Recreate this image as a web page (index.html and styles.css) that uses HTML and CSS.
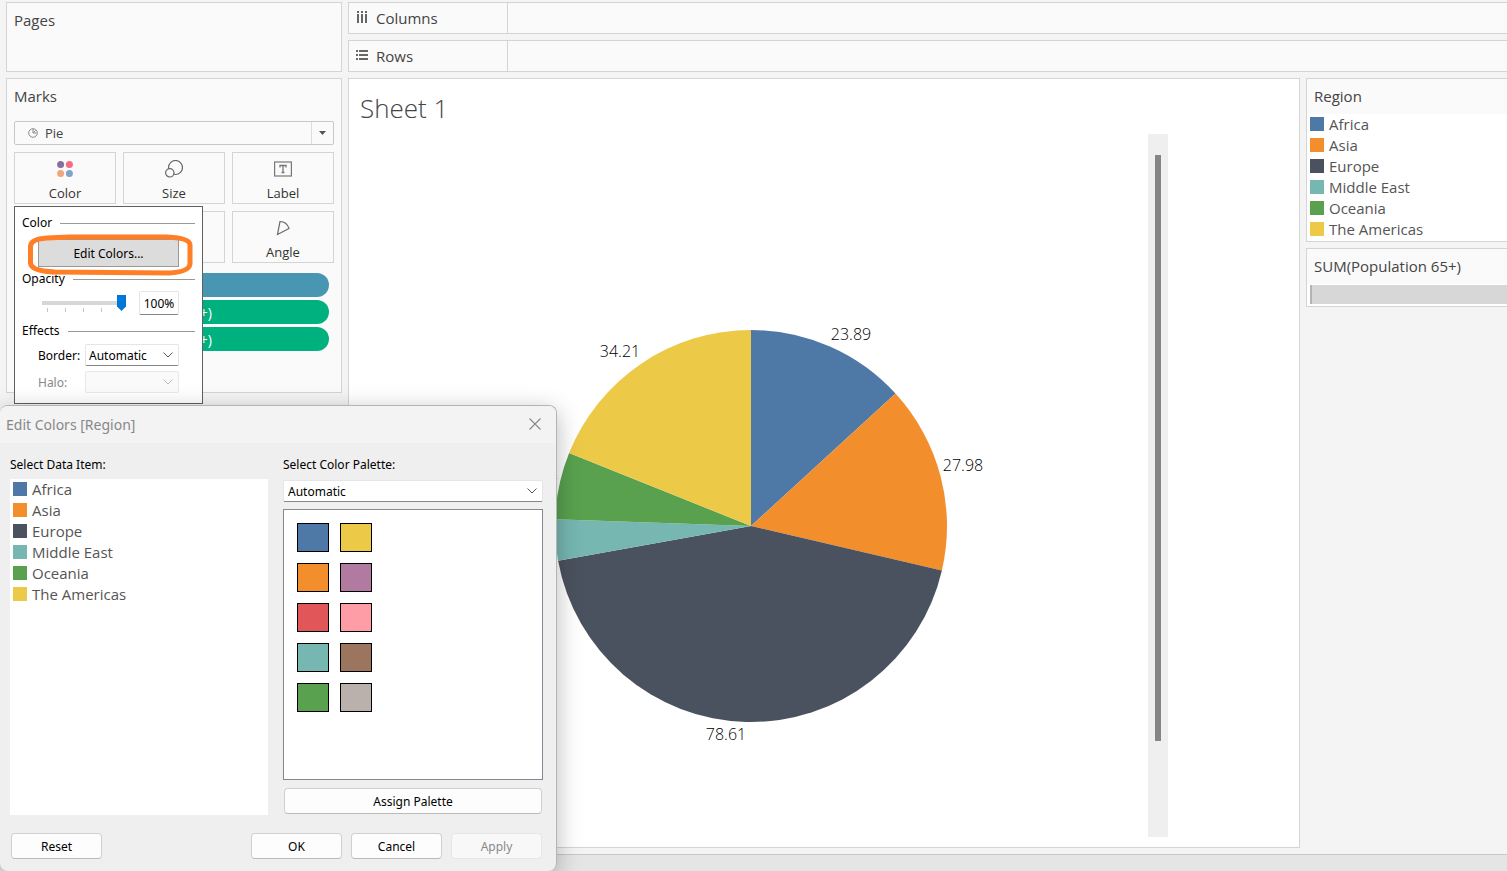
FILE: index.html
```html
<!DOCTYPE html>
<html lang="en">
<head>
<meta charset="utf-8">
<title>Sheet 1</title>
<link rel="stylesheet" href="styles.css">
</head>
<body>
<div class="workspace">
  <aside class="side">
    <section class="card pages"><h2 class="card-title">Pages</h2></section>
    <section class="card marks">
      <h2 class="card-title">Marks</h2>
      <button class="mark-type" type="button">
        <svg class="pie-icon" width="10" height="10" viewBox="0 0 10 10" fill="none" stroke="#8a8a8a"><circle cx="5" cy="5" r="4.3"/><path d="M5 1v4h3.5M5 5l2.5-2.5"/></svg>
        <span class="mark-name">Pie</span>
        <span class="mark-arrow"><svg width="7" height="4" viewBox="0 0 7 4"><path d="M0 0h7L3.500 4z" fill="#555"/></svg></span>
      </button>
      <div class="mark-grid">
        <button class="mark" type="button">
          <svg width="18" height="18" viewBox="0 0 18 18"><circle cx="4.600" cy="4.600" r="3.500" fill="#86709b"/><circle cx="13.400" cy="4.600" r="3.500" fill="#f96b80"/><circle cx="4.600" cy="13.400" r="3.500" fill="#f2a57a"/><circle cx="13.400" cy="13.400" r="3.500" fill="#7fa3cb"/></svg>
          Color</button>
        <button class="mark" type="button">
          <svg width="18" height="18" viewBox="0 0 18 18" fill="none" stroke="#666" stroke-width="1.200"><circle cx="10.500" cy="7.500" r="7"/><circle cx="4.800" cy="12.800" r="4.200" fill="#fafafa"/></svg>
          Size</button>
        <button class="mark" type="button">
          <svg width="18" height="18" viewBox="0 0 18 18" fill="none" stroke="#777"><rect x=".6" y="2" width="16.800" height="14" stroke-width="1.200"/><path d="M6 7.500V5.500h6v2M9 5.500v7M7.500 12.500h3" stroke-width="1.300"/></svg>
          Label</button>
        <button class="mark" type="button" aria-label="Detail"></button>
        <button class="mark" type="button" aria-label="Tooltip"></button>
        <button class="mark" type="button">
          <svg width="18" height="18" viewBox="0 0 18 18" fill="none" stroke="#666" stroke-width="1.200"><path d="M6 2.500L3.500 15.500 15 9.500C13.500 5 10 2.500 6 2.500z"/></svg>
          Angle</button>
      </div>
      <ul class="pills">
        <li class="pill pill-dim" aria-label="Region"></li>
        <li class="pill"><span>SUM(Population 65+)</span></li>
        <li class="pill"><span>SUM(Population 65+)</span></li>
      </ul>
      <div class="popup">
        <h3 class="group">Color</h3>
        <div class="edit-wrap">
          <button class="edit" type="button">Edit Colors...</button>
          <svg class="ring" width="168" height="44" viewBox="0 0 168 44" fill="none" stroke="#ff7f27" stroke-width="5"><path d="M20 5L42 4 140 4Q163 5 163 12L163 31Q162 39 142 40L28 39Q4 38 3.500 30L3.500 13Q4 6 20 5z"/></svg>
        </div>
        <h3 class="group">Opacity</h3>
        <div class="opacity">
          <div class="slider">
            <input type="range" min="0" max="100" value="100" aria-label="Opacity">
            <div class="ticks"><i></i><i></i><i></i><i></i></div>
          </div>
          <input class="percent" type="text" value="100%" aria-label="Opacity percent">
        </div>
        <h3 class="group effects">Effects</h3>
        <div class="field">
          <label for="border">Border:</label>
          <div class="combo"><select id="border"><option>Automatic</option></select><svg class="chev" width="10" height="6" viewBox="0 0 10 6"><path d="M.5.5L5 5 9.500.5"/></svg></div>
        </div>
        <div class="field off">
          <label for="halo">Halo:</label>
          <div class="combo"><select id="halo" disabled></select><svg class="chev" width="10" height="6" viewBox="0 0 10 6"><path d="M.5.5L5 5 9.500.5"/></svg></div>
        </div>
      </div>
    </section>
  </aside>
  <main class="main">
    <div class="shelf"><div class="shelf-name">
      <svg width="12" height="12" viewBox="0 0 12 12" fill="#666"><path d="M1 0h2v2H1zM5 0h2v2H5zM9 0h2v2H9zM1 3h2v9H1zM5 3h2v9H5zM9 3h2v9H9z"/></svg>Columns</div></div>
    <div class="shelf"><div class="shelf-name">
      <svg width="12" height="12" viewBox="0 0 12 12" fill="#666"><path d="M0 1h2v2H0zM0 5h2v2H0zM0 9h2v2H0zM3 1h9v2H3zM3 5h9v2H3zM3 9h9v2H3z"/></svg>Rows</div></div>
    <div class="view">
      <section class="sheet">
        <h1 class="sheet-title">Sheet 1</h1>
        <div class="viz">
          <svg class="chart" viewBox="0 0 794 703" preserveAspectRatio="xMidYMin meet" role="img" aria-label="Population 65+ by region">
            <path fill="#4e79a7" d="M397 392V196A196 196 0 0 1 541.500 259.600z"/>
            <path fill="#f28e2b" d="M397 392L541.500 259.600A196 196 0 0 1 587.900 436.400z"/>
            <path fill="#4b525f" d="M397 392L587.900 436.400A196 196 0 0 1 204.100 426.700z"/>
            <path fill="#76b7b2" d="M397 392L204.100 426.700A196 196 0 0 1 201.100 385.200z"/>
            <path fill="#59a14f" d="M397 392L201.100 385.200A196 196 0 0 1 215.100 319z"/>
            <path fill="#edc948" d="M397 392L215.100 319A196 196 0 0 1 397 196z"/>
            <g class="value"><text x="497" y="206">23.89</text><text x="609" y="337">27.98</text><text x="372" y="606">78.61</text><text x="184" y="345">10.12</text><text x="266" y="223">34.21</text></g>
          </svg>
          <div class="scroll"><div class="thumb"></div></div>
        </div>
      </section>
      <aside class="legends">
        <section class="card">
          <h2 class="card-title legend-title">Region</h2>
          <ul class="items">
            <li><i class="sw blue"></i>Africa</li><li><i class="sw orange"></i>Asia</li><li><i class="sw slate"></i>Europe</li><li><i class="sw teal"></i>Middle East</li><li><i class="sw green"></i>Oceania</li><li><i class="sw yellow"></i>The Americas</li>
          </ul>
        </section>
        <section class="card">
          <h2 class="card-title legend-title">SUM(Population 65+)</h2>
          <div class="size-range"><div></div></div>
        </section>
      </aside>
    </div>
  </main>
</div>
<footer class="status"></footer>

<div class="dialog" role="dialog" aria-labelledby="dlg-title">
  <header class="dlg-head"><h2 id="dlg-title">Edit Colors [Region]</h2>
    <button class="close" type="button" aria-label="Close"><svg width="12" height="12" viewBox="0 0 12 12" stroke="#888" stroke-width="1.100"><path d="M.5.5l11 11M11.500.5l-11 11"/></svg></button></header>
  <div class="dlg-body">
    <div class="dlg-left">
      <h3 class="dlg-label">Select Data Item:</h3>
      <ul class="items data-list">
        <li><i class="sw blue"></i>Africa</li><li><i class="sw orange"></i>Asia</li><li><i class="sw slate"></i>Europe</li><li><i class="sw teal"></i>Middle East</li><li><i class="sw green"></i>Oceania</li><li><i class="sw yellow"></i>The Americas</li>
      </ul>
    </div>
    <div class="dlg-right">
      <label class="dlg-label" for="palette">Select Color Palette:</label>
      <div class="combo"><select id="palette"><option>Automatic</option></select><svg class="chev" width="10" height="6" viewBox="0 0 10 6"><path d="M.5.5L5 5 9.500.5"/></svg></div>
      <div class="palette">
        <button class="chip blue" type="button" aria-label="Blue"></button><button class="chip yellow" type="button" aria-label="Yellow"></button>
        <button class="chip orange" type="button" aria-label="Orange"></button><button class="chip purple" type="button" aria-label="Purple"></button>
        <button class="chip red" type="button" aria-label="Red"></button><button class="chip pink" type="button" aria-label="Pink"></button>
        <button class="chip teal" type="button" aria-label="Teal"></button><button class="chip brown" type="button" aria-label="Brown"></button>
        <button class="chip green" type="button" aria-label="Green"></button><button class="chip gray" type="button" aria-label="Gray"></button>
      </div>
      <button class="btn assign" type="button">Assign Palette</button>
    </div>
  </div>
  <footer class="dlg-foot">
    <button class="btn reset" type="button">Reset</button>
    <button class="btn" type="button">OK</button>
    <button class="btn" type="button">Cancel</button>
    <button class="btn" type="button" disabled>Apply</button>
  </footer>
</div>
</body>
</html>
```
FILE: styles.css
```css
* { box-sizing: border-box; }
body {
  margin: 0;
  height: 100vh;
  display: flex;
  flex-direction: column;
  overflow: hidden;
  background: #f4f4f4;
  color: #444;
  font: 15px/20px "Open Sans", sans-serif;
}
h1, h2, h3, ul { margin: 0; padding: 0; font-weight: 400; list-style: none; }
button, input, select { font: inherit; color: inherit; margin: 0; }
svg { flex: none; }

.blue { background: #4e79a7; }
.orange { background: #f28e2b; }
.slate { background: #4b525f; }
.teal { background: #76b7b2; }
.green { background: #59a14f; }
.yellow { background: #edc948; }
.purple { background: #b07aa1; }
.red { background: #e15759; }
.pink { background: #ff9da7; }
.brown { background: #9c755f; }
.gray { background: #bab0ac; }

.workspace {
  flex: 1;
  min-height: 0;
  display: grid;
  grid-template-columns: 336px 1fr;
  gap: 6px;
  padding: 2px 0 6px 6px;
}
.side, .main { display: flex; flex-direction: column; gap: 6px; min-width: 0; }
.card { background: #fafafa; border: 1px solid #d4d4d4; }
.card-title { font-size: 15px; line-height: 20px; }
.pages { height: 70px; padding: 7px; }
.marks { position: relative; height: 315px; padding: 7px; }

.mark-type {
  display: flex;
  align-items: center;
  width: 100%;
  height: 24px;
  margin-top: 15px;
  padding: 0 0 0 13px;
  border: 1px solid #c8c8c8;
  border-radius: 2px;
  background: #fafafa;
  font-size: 13px;
  text-align: left;
}
.mark-name { flex: 1; padding-left: 7px; }
.mark-arrow {
  display: flex;
  align-items: center;
  justify-content: center;
  width: 22px;
  height: 22px;
  border-left: 1px solid #ddd;
}
.mark-grid {
  display: grid;
  grid-template-columns: repeat(3, 1fr);
  gap: 7px;
  margin-top: 7px;
}
.mark {
  display: flex;
  flex-direction: column;
  align-items: center;
  gap: 6px;
  height: 52px;
  padding: 7px 0 0;
  border: 1px solid #d4d4d4;
  background: #fafafa;
  color: #333;
  font-size: 13px;
  line-height: 18px;
}
.pills { display: flex; flex-direction: column; gap: 3px; margin: 10px 5px 0 19px; }
.pill {
  height: 24px;
  border-radius: 12px;
  background: #00b180;
  color: #fff;
  font-size: 14px;
  line-height: 26px;
}
.pill span { display: block; width: 179px; text-align: right; }
.pill-dim { background: #4996b2; }

.popup {
  position: absolute;
  left: 7px;
  top: 127px;
  width: 189px;
  height: 198px;
  padding: 8px 7px 7px;
  border: 1px solid #606060;
  background: #fff;
  color: #000;
  font: 12px/16px "Noto Sans", sans-serif;
}
.group { display: flex; align-items: center; gap: 8px; font-size: 12px; line-height: 16px; }
.group::after { content: ""; flex: 1; border-top: 1px solid #999; }
.edit-wrap { position: relative; padding: 8px 16px 4px; }
.edit {
  display: block;
  width: 100%;
  height: 28px;
  padding: 2px 0 0;
  border: 1px solid #999;
  background: #dcdcdc;
}
.ring { position: absolute; left: 5px; top: 2px; }
.opacity { display: flex; align-items: center; justify-content: space-between; height: 32px; margin-bottom: 4px; padding: 0 16px 0 20px; }
.slider { width: 84px; height: 16px; }
.slider input {
  display: block;
  width: 84px;
  height: 16px;
  appearance: none;
  background: linear-gradient(#d5d8d7, #d5d8d7) 0 6px / 84px 4px no-repeat;
}
.slider input::-webkit-slider-thumb {
  appearance: none;
  width: 9px;
  height: 16px;
  background: #0078d7;
  clip-path: polygon(0 0, 100% 0, 100% 72%, 50% 100%, 0 72%);
}
.ticks { display: flex; gap: 17px; padding-left: 5px; margin-top: -3px; }
.ticks i { width: 1px; height: 4px; background: #c4c4c4; }
.percent {
  width: 40px;
  height: 24px;
  padding: 0 2px;
  border: 1px solid #e5e5e5;
  border-bottom-color: #868686;
  border-radius: 2px;
  text-align: center;
}
.field { display: grid; grid-template-columns: 47px 94px; align-items: center; margin: 5px 0 0 16px; }
.field label { padding-top: 2px; }
.combo { position: relative; height: 22px; }
.combo select {
  width: 100%;
  height: 100%;
  padding: 2px 3px 0;
  appearance: none;
  border: 1px solid #e5e5e5;
  border-bottom-color: #868686;
  border-radius: 2px;
  background: #fff;
}
.chev { position: absolute; right: 6px; top: 8px; fill: none; stroke: #555; }
.off { color: #888; }
.combo select:disabled { background: #fafafa; border-color: #e8e8e8; opacity: 1; }
.off .chev { stroke: #bbb; }

.shelf { height: 32px; border: 1px solid #d4d4d4; border-right: 0; background: #fafafa; }
.shelf-name {
  display: flex;
  align-items: center;
  gap: 8px;
  width: 159px;
  height: 30px;
  padding: 0 0 1px 7px;
  border-right: 1px solid #d4d4d4;
}
.shelf-name svg { margin-bottom: 1px; }
.view { flex: 1; min-height: 0; display: grid; grid-template-columns: 1fr 201px; gap: 6px; }
.sheet { display: flex; flex-direction: column; min-height: 0; padding: 14px 131px 10px 5px; border: 1px solid #d4d4d4; background: #fff; }
.sheet-title { padding-left: 6px; font-size: 26px; line-height: 30px; font-weight: 300; }
.viz { flex: 1; display: flex; min-height: 0; margin-top: 11px; }
.chart { flex: 1 1 0; min-width: 0; height: 703px; }
.value { fill: #000; font-size: 16px; font-weight: 300; text-anchor: middle; }
.scroll { width: 20px; padding: 21px 6px 0 7px; background: #efefef; }
.thumb { width: 6px; height: 586px; background: #858585; }

.legends { display: flex; flex-direction: column; gap: 6px; min-width: 0; }
.legends .card { border-right: 0; background: #fff; }
.legend-title { height: 35px; padding: 7px 7px 0; background: #fafafa; }
.items { padding: 0 3px 1px; color: #555; }
.items li { display: flex; align-items: center; gap: 5px; height: 21px; padding-bottom: 1px; }
.sw { width: 14px; height: 14px; }
.size-range { padding: 1px 0 2px 3px; }
.size-range div { height: 19px; border-left: 2px solid #b4b4b4; background: #d7d7d7; }
.status { height: 17px; border-top: 1px solid #c8c8c8; background: #e5e5e5; }

.dialog {
  position: absolute;
  left: 0;
  bottom: 0;
  width: 557px;
  height: 466px;
  display: flex;
  flex-direction: column;
  border: 1px solid #b4b4b4;
  border-width: 1px 1px 0 0;
  border-radius: 8px;
  background: #efefef;
  color: #000;
  font: 12px/16px "Noto Sans", sans-serif;
  box-shadow: 0 6px 24px rgba(0, 0, 0, 0.28);
  overflow: hidden;
}
.dlg-head {
  display: flex;
  align-items: center;
  justify-content: space-between;
  height: 37px;
  padding: 0 15px 0 6px;
  background: #f3f3f3;
  color: #888;
}
.dlg-head h2 { font-size: 14px; line-height: 20px; }
.close { display: flex; padding: 0 0 1px; border: 0; background: none; }
.dlg-body { display: grid; grid-template-columns: 258px 260px; gap: 15px; padding: 14px 0 0 10px; }
.dlg-left { display: flex; flex-direction: column; }
.dlg-label { display: block; font-size: 12px; line-height: 16px; }
.data-list { height: 336px; margin-top: 6px; background: #fff; font: 15px/20px "Open Sans", sans-serif; }
.dlg-right .combo { margin: 7px 0; }
.dlg-right .combo select { padding: 1px 4px 0; }
.palette {
  display: grid;
  grid-template-columns: 32px 32px;
  grid-auto-rows: 29px;
  gap: 11px;
  align-content: start;
  height: 271px;
  padding: 13px;
  border: 1px solid #828790;
  background: #fff;
}
.chip { padding: 0; border: 1px solid #000; }
.btn {
  width: 91px;
  height: 26px;
  padding: 1px 0 0;
  border: 1px solid #d0d0d0;
  border-bottom-color: #bababa;
  border-radius: 4px;
  background: #fdfdfd;
}
.btn:disabled { border-color: #e6e6e6; background: #f8f8f8; color: #888; }
.assign { display: block; width: 258px; margin: 8px 0 0 1px; }
.dlg-foot { display: flex; gap: 9px; margin-top: 18px; padding: 0 14px 0 11px; }
.reset { margin-right: auto; }
```
